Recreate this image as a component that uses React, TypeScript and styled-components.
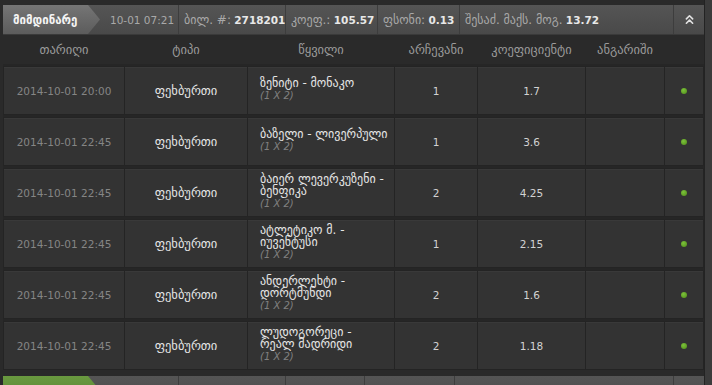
import React from 'react';
import styled, { createGlobalStyle } from 'styled-components';
import { ChevronsUp } from 'lucide-react';

const GlobalStyle = createGlobalStyle`
  * { box-sizing: border-box; }
  html, body {
    margin: 0;
    padding: 0;
    height: 100%;
    overflow: hidden;
    background: #2c2c2c;
  }
  body {
    font-family: "DejaVu Sans", "Noto Sans", sans-serif;
    font-size: 10.5px;
    color: #ddd;
  }
`;

interface Bet {
  date: string;
  pair: string[];
  pick: string;
  odds: string;
}

const bets: Bet[] = [
  { date: '2014-10-01 20:00', pair: ['ზენიტი - მონაკო'], pick: '1', odds: '1.7' },
  { date: '2014-10-01 22:45', pair: ['ბაზელი - ლივერპული'], pick: '1', odds: '3.6' },
  { date: '2014-10-01 22:45', pair: ['ბაიერ ლევერკუზენი -', 'ბენფიკა'], pick: '2', odds: '4.25' },
  { date: '2014-10-01 22:45', pair: ['ატლეტიკო მ. -', 'იუვენტუსი'], pick: '1', odds: '2.15' },
  { date: '2014-10-01 22:45', pair: ['ანდერლეხტი -', 'დორტმუნდი'], pick: '2', odds: '1.6' },
  { date: '2014-10-01 22:45', pair: ['ლუდოგორეცი -', 'რეალ მადრიდი'], pick: '2', odds: '1.18' },
];

const columns = ['თარიღი', 'ტიპი', 'წყვილი', 'არჩევანი', 'კოეფიციენტი', 'ანგარიში', ''];

const App: React.FC = () => {
  return (
    <Page>
      <GlobalStyle />
      <Main>
        <Slip>
          <TopBar>
            <Tab>მიმდინარე</Tab>
            <Segment $w={79} $pl={10}>10-01 07:21</Segment>
            <Segment $w={107}>
              <Label>ბილ. #:</Label>&nbsp;<Value>2718201</Value>
            </Segment>
            <Segment $w={92}>
              <Label>კოეფ.:</Label>&nbsp;<Value>105.57</Value>
            </Segment>
            <Segment $w={82}>
              <Label>ფსონი:</Label>&nbsp;<Value>0.13</Value>
            </Segment>
            <Segment $grow>
              <Label>შესაძ. მაქს. მოგ.</Label>&nbsp;<Value>13.72</Value>
            </Segment>
            <Toggle>
              <ChevronsUp size={15} strokeWidth={2.6} color="#e2e2e2" />
            </Toggle>
          </TopBar>
          <HeadRow>
            {columns.map((c, i) => (
              <HeadCell key={i}>{c}</HeadCell>
            ))}
          </HeadRow>
          <Rows>
            {bets.map((b, i) => (
              <Row key={i}>
                <DateCell>{b.date}</DateCell>
                <Cell $geo>ფეხბურთი</Cell>
                <PairCell>
                  {b.pair.map((line, j) => (
                    <PairLine key={j}>{line}</PairLine>
                  ))}
                  <Market>(1 X 2)</Market>
                </PairCell>
                <Cell $dim>{b.pick}</Cell>
                <Cell $dim>{b.odds}</Cell>
                <Cell />
                <Cell>
                  <Dot />
                </Cell>
              </Row>
            ))}
          </Rows>
        </Slip>
        <Slip>
          <TopBar>
            <Tab $green />
            <Segment $w={79} />
            <Segment $w={107} />
            <Segment $w={79} />
            <Segment $w={90} />
            <Segment $grow />
            <Toggle />
          </TopBar>
        </Slip>
      </Main>
      <ScrollTrack />
    </Page>
  );
};

const Page = styled.div`
  display: flex;
  width: 712px;
  height: 385px;
  overflow: hidden;
`;

const Main = styled.div`
  width: 704px;
  padding: 5px 0 0 3px;
  display: flex;
  flex-direction: column;
  gap: 6px;
  background: #2a2a2a;
`;

const ScrollTrack = styled.div`
  width: 8px;
  height: 100%;
  background: #3b3b3b;
  border-left: 1px solid #232323;
`;

const Slip = styled.div`
  width: 701px;
  flex-shrink: 0;
  background: #262626;
`;

const TopBar = styled.div`
  display: flex;
  align-items: stretch;
  height: 30px;
  background: linear-gradient(#555555, #494949);
  border-bottom: 1px solid #3a3a3a;
`;

const Tab = styled.div<{ $green?: boolean }>`
  width: 97px;
  flex-shrink: 0;
  display: flex;
  align-items: center;
  padding-left: 10px;
  font-size: 11.5px;
  font-weight: bold;
  color: #f4f4f4;
  background: ${(p) =>
    p.$green ? 'linear-gradient(#6a9a40, #557f30)' : 'linear-gradient(#757575, #5c5c5c)'};
  clip-path: polygon(0 0, 85px 0, 97px 50%, 85px 100%, 0 100%);
`;

const Segment = styled.div<{ $w?: number; $pl?: number; $grow?: boolean }>`
  ${(p) => (p.$grow ? 'flex: 1;' : `width: ${p.$w}px; flex-shrink: 0;`)}
  display: flex;
  align-items: center;
  padding-left: ${(p) => p.$pl ?? 5}px;
  border-right: 1px solid #3d3d3d;
  color: #a9a9a9;
  white-space: nowrap;
  overflow: hidden;
`;

const Label = styled.span`
  font-size: 12px;
`;

const Value = styled.b`
  color: #e8e8e8;
  font-size: 10.5px;
`;

const Toggle = styled.div`
  width: 30px;
  display: flex;
  align-items: center;
  justify-content: center;
`;

const grid = `
  display: grid;
  grid-template-columns: 120px 122px 146px 82px 107px 78px 38px;
  column-gap: 1px;
`;

const HeadRow = styled.div`
  ${grid}
  height: 29px;
  padding-left: 1px;
  align-items: center;
  background: #2a2a2a;
`;

const HeadCell = styled.div`
  text-align: center;
  font-size: 12.5px;
  color: #9c9c9c;
`;

const Rows = styled.div`
  display: flex;
  flex-direction: column;
  gap: 2px;
  padding-top: 2px;
  background: #262626;
`;

const Row = styled.div`
  ${grid}
  height: 49px;
  padding: 1px;
  background: #242424;
`;

const Cell = styled.div<{ $dim?: boolean; $geo?: boolean }>`
  display: flex;
  align-items: center;
  justify-content: center;
  background: #333333;
  box-shadow: inset 0 1px 0 #393939;
  font-size: ${(p) => (p.$geo ? '12.5px' : '10.5px')};
  color: ${(p) => (p.$dim ? '#d2d2d2' : '#e6e6e6')};
`;

const DateCell = styled(Cell)`
  color: #858585;
`;

const PairCell = styled.div`
  display: flex;
  flex-direction: column;
  justify-content: center;
  padding: 0 0 2px 12px;
  background: #333333;
  box-shadow: inset 0 1px 0 #393939;
  color: #e6e6e6;
  font-size: 12px;
  line-height: 12.5px;
  white-space: nowrap;
`;

const PairLine = styled.span``;

const Market = styled.span`
  font-style: italic;
  font-size: 10px;
  color: #808080;
`;

const Dot = styled.span`
  width: 6px;
  height: 6px;
  border-radius: 50%;
  background: radial-gradient(circle at 40% 35%, #7cc23a, #4f8c1a);
`;

export default App;
